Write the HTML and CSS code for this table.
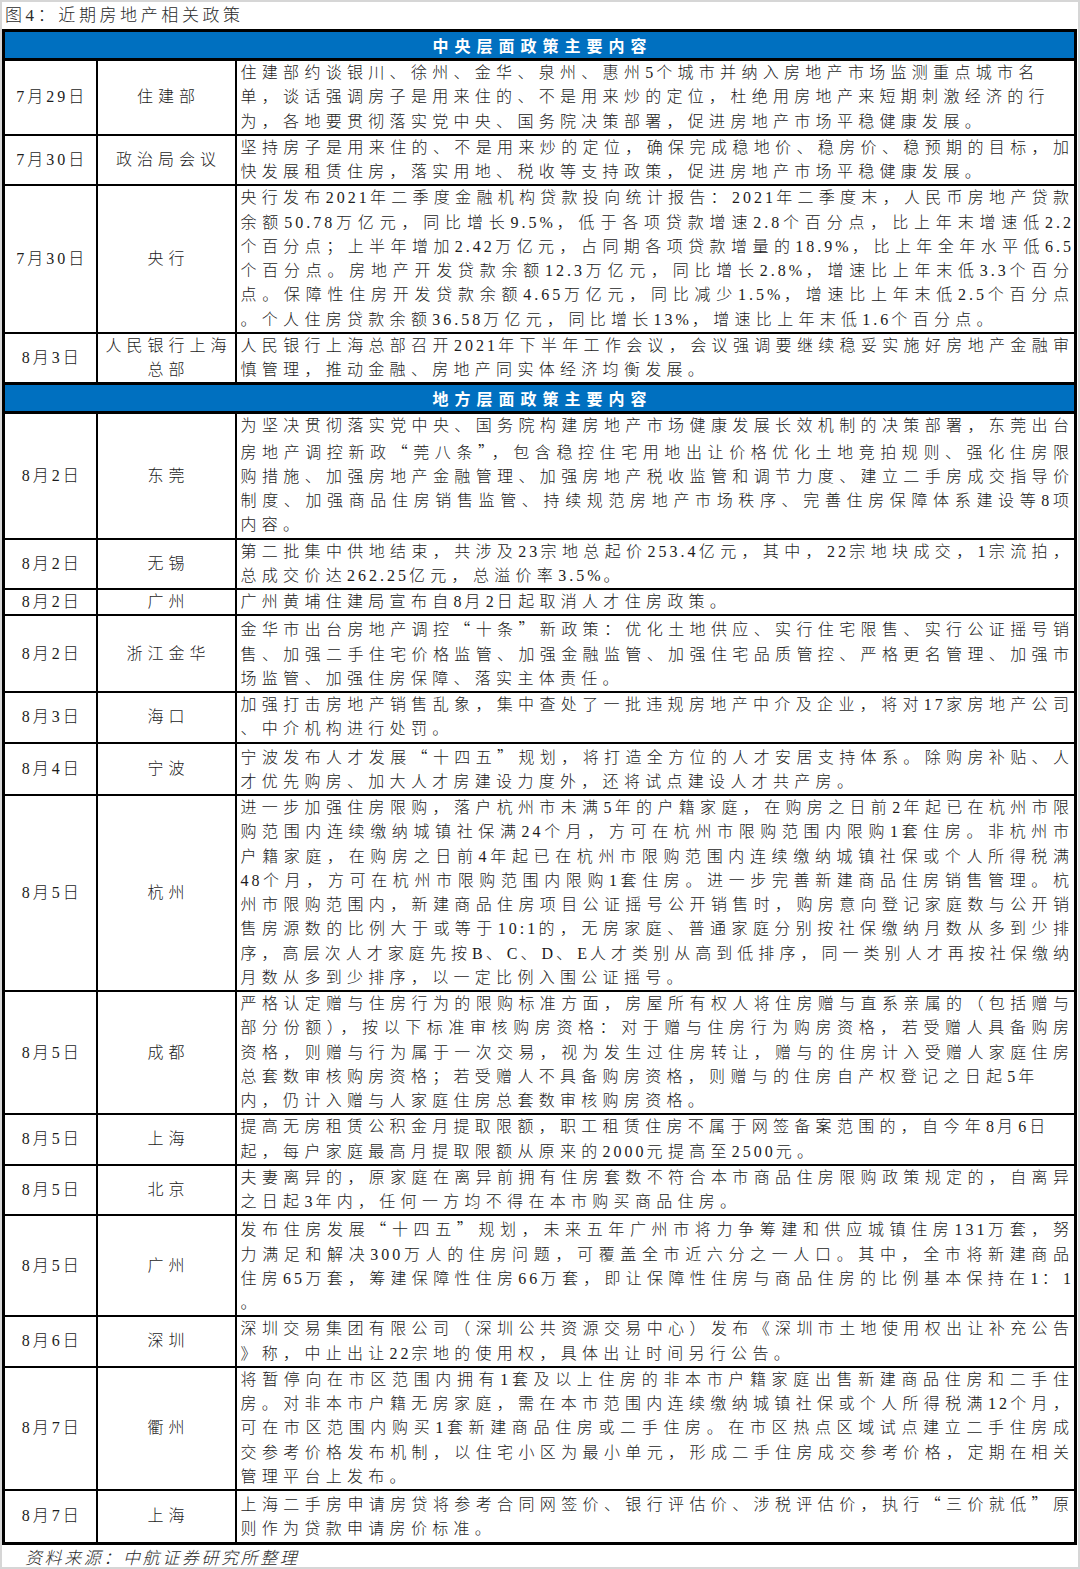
FILE: index.html
```html
<!DOCTYPE html>
<html lang="zh-CN">
<head>
<meta charset="utf-8">
<title>图4：近期房地产相关政策</title>
<link rel="stylesheet" href="styles.css">
</head>
<body>
<div class="page">
  <div class="title">图4：近期房地产相关政策</div>
  <table class="policy">
    <colgroup><col class="c-date"><col class="c-org"><col class="c-text"></colgroup>
    <tr class="sec"><th colspan="3">中央层面政策主要内容</th></tr>
    <tr>
      <td class="date">7月29日</td><td class="org">住建部</td>
      <td class="txt"><span class="l">住建部约谈银川、徐州、金华、泉州、惠州<span class="n">5</span>个城市并纳入房地产市场监测重点城市名</span><span class="l">单，谈话强调房子是用来住的、不是用来炒的定位，杜绝用房地产来短期刺激经济的行</span><span class="l">为，各地要贯彻落实党中央、国务院决策部署，促进房地产市场平稳健康发展。</span></td>
    </tr>
    <tr>
      <td class="date">7月30日</td><td class="org">政治局会议</td>
      <td class="txt"><span class="l j">坚持房子是用来住的、不是用来炒的定位，确保完成稳地价、稳房价、稳预期的目标，加</span><span class="l">快发展租赁住房，落实用地、税收等支持政策，促进房地产市场平稳健康发展。</span></td>
    </tr>
    <tr>
      <td class="date">7月30日</td><td class="org">央行</td>
      <td class="txt"><span class="l j">央行发布<span class="n">2021</span>年二季度金融机构贷款投向统计报告：<span class="n">2021</span>年二季度末，人民币房地产贷款</span><span class="l j">余额<span class="n">50.78</span>万亿元，同比增长<span class="n">9.5%</span>，低于各项贷款增速<span class="n">2.8</span>个百分点，比上年末增速低<span class="n">2.2</span></span><span class="l j">个百分点；上半年增加<span class="n">2.42</span>万亿元，占同期各项贷款增量的<span class="n">18.9%</span>，比上年全年水平低<span class="n">6.5</span></span><span class="l j">个百分点。房地产开发贷款余额<span class="n">12.3</span>万亿元，同比增长<span class="n">2.8%</span>，增速比上年末低<span class="n">3.3</span>个百分</span><span class="l j">点。保障性住房开发贷款余额<span class="n">4.65</span>万亿元，同比减少<span class="n">1.5%</span>，增速比上年末低<span class="n">2.5</span>个百分点</span><span class="l">。个人住房贷款余额<span class="n">36.58</span>万亿元，同比增长<span class="n">13%</span>，增速比上年末低<span class="n">1.6</span>个百分点。</span></td>
    </tr>
    <tr>
      <td class="date">8月3日</td><td class="org">人民银行上海<br>总部</td>
      <td class="txt"><span class="l j">人民银行上海总部召开<span class="n">2021</span>年下半年工作会议，会议强调要继续稳妥实施好房地产金融审</span><span class="l">慎管理，推动金融、房地产同实体经济均衡发展。</span></td>
    </tr>
    <tr class="sec"><th colspan="3">地方层面政策主要内容</th></tr>
    <tr>
      <td class="date">8月2日</td><td class="org">东莞</td>
      <td class="txt"><span class="l j">为坚决贯彻落实党中央、国务院构建房地产市场健康发展长效机制的决策部署，东莞出台</span><span class="l j">房地产调控新政<span class="q">“</span>莞八条<span class="q">”</span>，包含稳控住宅用地出让价格优化土地竞拍规则、强化住房限</span><span class="l j">购措施、加强房地产金融管理、加强房地产税收监管和调节力度、建立二手房成交指导价</span><span class="l j">制度、加强商品住房销售监管、持续规范房地产市场秩序、完善住房保障体系建设等<span class="n">8</span>项</span><span class="l">内容。</span></td>
    </tr>
    <tr>
      <td class="date">8月2日</td><td class="org">无锡</td>
      <td class="txt"><span class="l j">第二批集中供地结束，共涉及<span class="n">23</span>宗地总起价<span class="n">253.4</span>亿元，其中，<span class="n">22</span>宗地块成交，<span class="n">1</span>宗流拍，</span><span class="l">总成交价达<span class="n">262.25</span>亿元，总溢价率<span class="n">3.5%</span>。</span></td>
    </tr>
    <tr>
      <td class="date">8月2日</td><td class="org">广州</td>
      <td class="txt"><span class="l">广州黄埔住建局宣布自<span class="n">8</span>月<span class="n">2</span>日起取消人才住房政策。</span></td>
    </tr>
    <tr>
      <td class="date">8月2日</td><td class="org">浙江金华</td>
      <td class="txt"><span class="l j">金华市出台房地产调控<span class="q">“</span>十条<span class="q">”</span>新政策：优化土地供应、实行住宅限售、实行公证摇号销</span><span class="l j">售、加强二手住宅价格监管、加强金融监管、加强住宅品质管控、严格更名管理、加强市</span><span class="l">场监管、加强住房保障、落实主体责任。</span></td>
    </tr>
    <tr>
      <td class="date">8月3日</td><td class="org">海口</td>
      <td class="txt"><span class="l j">加强打击房地产销售乱象，集中查处了一批违规房地产中介及企业，将对<span class="n">17</span>家房地产公司</span><span class="l">、中介机构进行处罚。</span></td>
    </tr>
    <tr>
      <td class="date">8月4日</td><td class="org">宁波</td>
      <td class="txt"><span class="l j">宁波发布人才发展<span class="q">“</span>十四五<span class="q">”</span>规划，将打造全方位的人才安居支持体系。除购房补贴、人</span><span class="l">才优先购房、加大人才房建设力度外，还将试点建设人才共产房。</span></td>
    </tr>
    <tr>
      <td class="date">8月5日</td><td class="org">杭州</td>
      <td class="txt"><span class="l j">进一步加强住房限购，落户杭州市未满<span class="n">5</span>年的户籍家庭，在购房之日前<span class="n">2</span>年起已在杭州市限</span><span class="l j">购范围内连续缴纳城镇社保满<span class="n">24</span>个月，方可在杭州市限购范围内限购<span class="n">1</span>套住房。非杭州市</span><span class="l j">户籍家庭，在购房之日前<span class="n">4</span>年起已在杭州市限购范围内连续缴纳城镇社保或个人所得税满</span><span class="l j"><span class="n">48</span>个月，方可在杭州市限购范围内限购<span class="n">1</span>套住房。进一步完善新建商品住房销售管理。杭</span><span class="l j">州市限购范围内，新建商品住房项目公证摇号公开销售时，购房意向登记家庭数与公开销</span><span class="l j">售房源数的比例大于或等于<span class="n">10:1</span>的，无房家庭、普通家庭分别按社保缴纳月数从多到少排</span><span class="l j">序，高层次人才家庭先按<span class="n">B</span>、<span class="n">C</span>、<span class="n">D</span>、<span class="n">E</span>人才类别从高到低排序，同一类别人才再按社保缴纳</span><span class="l">月数从多到少排序，以一定比例入围公证摇号。</span></td>
    </tr>
    <tr>
      <td class="date">8月5日</td><td class="org">成都</td>
      <td class="txt"><span class="l j">严格认定赠与住房行为的限购标准方面，房屋所有权人将住房赠与直系亲属的（包括赠与</span><span class="l j">部分份额），按以下标准审核购房资格：对于赠与住房行为购房资格，若受赠人具备购房</span><span class="l j">资格，则赠与行为属于一次交易，视为发生过住房转让，赠与的住房计入受赠人家庭住房</span><span class="l">总套数审核购房资格；若受赠人不具备购房资格，则赠与的住房自产权登记之日起<span class="n">5</span>年</span><span class="l">内，仍计入赠与人家庭住房总套数审核购房资格。</span></td>
    </tr>
    <tr>
      <td class="date">8月5日</td><td class="org">上海</td>
      <td class="txt"><span class="l">提高无房租赁公积金月提取限额，职工租赁住房不属于网签备案范围的，自今年<span class="n">8</span>月<span class="n">6</span>日</span><span class="l">起，每户家庭最高月提取限额从原来的<span class="n">2000</span>元提高至<span class="n">2500</span>元。</span></td>
    </tr>
    <tr>
      <td class="date">8月5日</td><td class="org">北京</td>
      <td class="txt"><span class="l j">夫妻离异的，原家庭在离异前拥有住房套数不符合本市商品住房限购政策规定的，自离异</span><span class="l">之日起<span class="n">3</span>年内，任何一方均不得在本市购买商品住房。</span></td>
    </tr>
    <tr>
      <td class="date">8月5日</td><td class="org">广州</td>
      <td class="txt"><span class="l j">发布住房发展<span class="q">“</span>十四五<span class="q">”</span>规划，未来五年广州市将力争筹建和供应城镇住房<span class="n">131</span>万套，努</span><span class="l j">力满足和解决<span class="n">300</span>万人的住房问题，可覆盖全市近六分之一人口。其中，全市将新建商品</span><span class="l j">住房<span class="n">65</span>万套，筹建保障性住房<span class="n">66</span>万套，即让保障性住房与商品住房的比例基本保持在<span class="n">1</span>：<span class="n">1</span></span><span class="l">。</span></td>
    </tr>
    <tr>
      <td class="date">8月6日</td><td class="org">深圳</td>
      <td class="txt"><span class="l j">深圳交易集团有限公司（深圳公共资源交易中心）发布《深圳市土地使用权出让补充公告</span><span class="l">》称，中止出让<span class="n">22</span>宗地的使用权，具体出让时间另行公告。</span></td>
    </tr>
    <tr>
      <td class="date">8月7日</td><td class="org">衢州</td>
      <td class="txt"><span class="l j">将暂停向在市区范围内拥有<span class="n">1</span>套及以上住房的非本市户籍家庭出售新建商品住房和二手住</span><span class="l j">房。对非本市户籍无房家庭，需在本市范围内连续缴纳城镇社保或个人所得税满<span class="n">12</span>个月，</span><span class="l j">可在市区范围内购买<span class="n">1</span>套新建商品住房或二手住房。在市区热点区域试点建立二手住房成</span><span class="l j">交参考价格发布机制，以住宅小区为最小单元，形成二手住房成交参考价格，定期在相关</span><span class="l">管理平台上发布。</span></td>
    </tr>
    <tr>
      <td class="date">8月7日</td><td class="org">上海</td>
      <td class="txt"><span class="l j">上海二手房申请房贷将参考合同网签价、银行评估价、涉税评估价，执行<span class="q">“</span>三价就低<span class="q">”</span>原</span><span class="l">则作为贷款申请房价标准。</span></td>
    </tr>
  </table>
  <div class="source">资料来源：中航证券研究所整理</div>
</div>
</body>
</html>
```
FILE: styles.css
```css
html, body {
  margin: 0;
  padding: 0;
  background: #ffffff;
}

.page {
  box-sizing: border-box;
  width: 1080px;
  height: 1569px;
  border: 2px solid #d6d6d6;
  background: #ffffff;
  font-family: "Liberation Serif", "Noto Sans CJK SC", serif;
  color: #1c1c1c;
  overflow: hidden;
}

.title {
  height: 27px;
  line-height: 27px;
  padding-left: 3px;
  font-size: 17px;
  letter-spacing: 3.6px;
  color: #2a2a2a;
  font-weight: 300;
}

.policy {
  width: 1075px;
  border-collapse: collapse;
  table-layout: fixed;
  border: 3px solid #000;
}

.c-date { width: 93px; }
.c-org { width: 139px; }

.policy td {
  border: 2px solid #000;
  padding: 0;
  font-size: 16px;
  line-height: 24.25px;
  font-weight: 300;
  vertical-align: middle;
}

.policy th {
  border: 3px solid #000;
  background: #0070c0;
  color: #ffffff;
  font-family: "Noto Sans CJK SC", sans-serif;
  font-size: 16px;
  font-weight: 700;
  height: 26px;
  line-height: 26px;
  padding: 0 0 0 6px;
  letter-spacing: 6px;
  text-align: center;
}

.date {
  text-align: center;
  letter-spacing: 3px;
  padding-left: 3px !important;
}

.org {
  text-align: center;
  letter-spacing: 5px;
  padding-left: 5px !important;
}

.txt {
  padding: 0 0 0 4px !important;
}

.l {
  display: block;
  white-space: nowrap;
  letter-spacing: 5.3px;
  text-align: left;
}

.l.j {
  letter-spacing: 5px;
  text-align: justify;
  text-align-last: justify;
}

.n {
  letter-spacing: 3px;
}

.q {
  font-family: "Noto Sans CJK SC", sans-serif;
}

.source {
  height: 27px;
  line-height: 27px;
  padding-left: 23px;
  font-size: 17px;
  font-style: italic;
  letter-spacing: 2.6px;
  color: #2a2a2a;
  font-weight: 300;
}
```
